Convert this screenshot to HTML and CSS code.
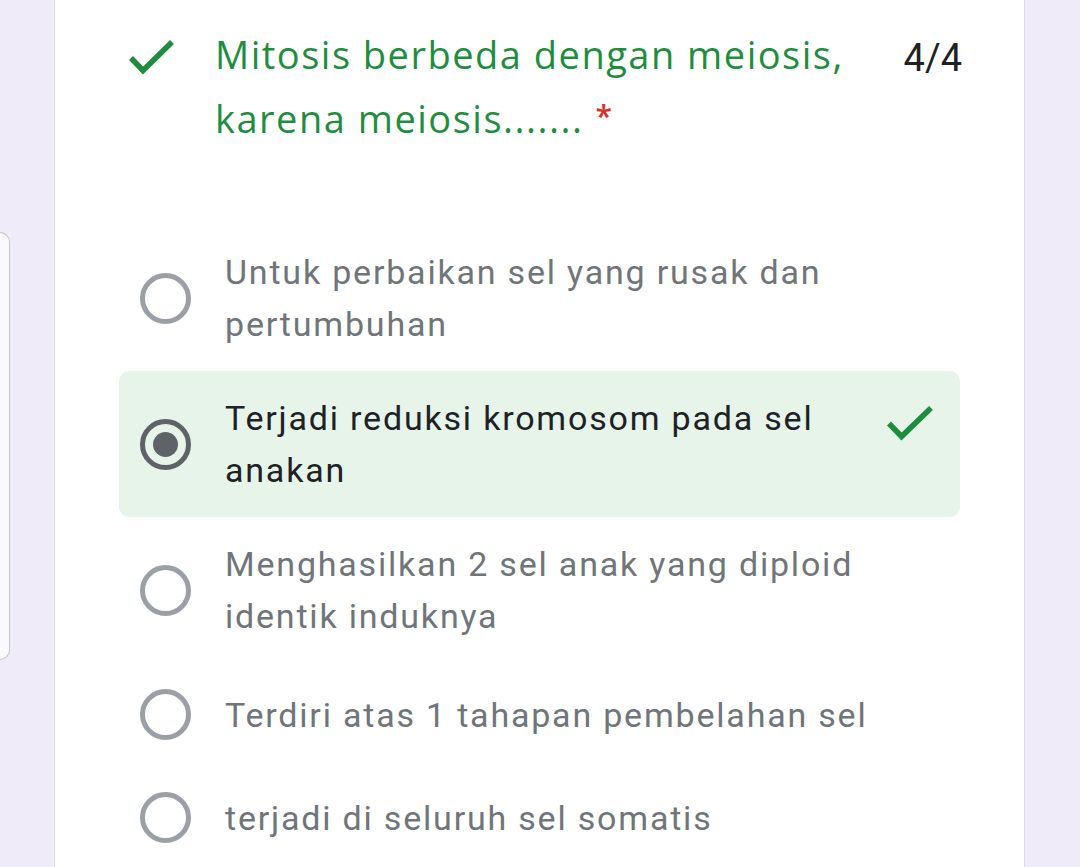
FILE: index.html
```html
<!DOCTYPE html>
<html lang="id">
<head>
<meta charset="utf-8">
<title>Kuis</title>
<link rel="stylesheet" href="styles.css">
</head>
<body>
<div class="page">
  <div class="peek"></div>
  <main class="card">
    <header class="question">
      <div class="q-icon">
        <svg width="50" height="40" viewBox="0 0 50 40"><polyline points="2,18 14,30.5 43,2" fill="none" stroke="#1e8e3e" stroke-width="5.5"/></svg>
      </div>
      <h1 class="q-title">Mitosis berbeda dengan meiosis, karena meiosis.......<span class="req">*</span></h1>
      <div class="score">4/4</div>
    </header>
    <ul class="options">
      <li class="option">
        <span class="radio"></span>
        <span class="label">Untuk perbaikan sel yang rusak dan pertumbuhan</span>
        <span class="mark"></span>
      </li>
      <li class="option selected">
        <span class="radio"><span class="dot"></span></span>
        <span class="label">Terjadi reduksi kromosom pada sel anakan</span>
        <span class="mark">
          <svg width="50" height="40" viewBox="0 0 50 40"><polyline points="3,17.5 15.5,30.5 45,2" fill="none" stroke="#1e8e3e" stroke-width="5.5"/></svg>
        </span>
      </li>
      <li class="option">
        <span class="radio"></span>
        <span class="label">Menghasilkan 2 sel anak yang diploid identik induknya</span>
        <span class="mark"></span>
      </li>
      <li class="option">
        <span class="radio"></span>
        <span class="label">Terdiri atas 1 tahapan pembelahan sel</span>
        <span class="mark"></span>
      </li>
      <li class="option">
        <span class="radio"></span>
        <span class="label">terjadi di seluruh sel somatis</span>
        <span class="mark"></span>
      </li>
    </ul>
  </main>
</div>
</body>
</html>
```
FILE: styles.css
```css
html, body {
  margin: 0;
  padding: 0;
  height: 100%;
}
body {
  background: #f0ebf8;
  overflow: hidden;
  font-family: Roboto, "Liberation Sans", sans-serif;
}
.page {
  display: flex;
  align-items: flex-start;
  height: 867px;
}
.peek {
  flex: 0 0 9px;
  height: 426px;
  margin-top: 232px;
  background: #faf9fd;
  border: 1px solid #c7c5cc;
  border-left: none;
  border-radius: 0 10px 10px 0;
}
.card {
  margin-left: 44px;
  width: 971px;
  height: 900px;
  background: #fff;
  border-left: 1px solid #dadce0;
  border-right: 1px solid #dadce0;
  box-sizing: border-box;
}
.question {
  display: flex;
  align-items: flex-start;
  padding: 22px 62px 0 74px;
}
.q-icon {
  flex: 0 0 86px;
  padding-top: 18px;
}
.q-icon svg {
  display: block;
}
.q-title {
  flex: 1;
  margin: 0;
  font-family: "Open Sans", sans-serif;
  font-weight: 400;
  font-size: 38px;
  letter-spacing: 1.5px;
  line-height: 64px;
  color: #1e8e3e;
}
.req {
  display: inline-block;
  color: #d93025;
  font-size: 30px;
  font-weight: 600;
  line-height: 30px;
  letter-spacing: 0;
  vertical-align: 6px;
  margin-left: 12px;
}
.score {
  font-size: 38px;
  line-height: 64px;
  color: #202124;
  padding-top: 4px;
  margin-left: 40px;
}
.options {
  list-style: none;
  margin: 75px 0 0;
  padding: 0 64px 0 64px;
}
.option {
  display: flex;
  align-items: center;
  padding: 21px 0 21px 21px;
  border-radius: 10px;
}
.option.selected {
  background: #e6f4ea;
}
.radio {
  flex: 0 0 auto;
  width: 51px;
  height: 51px;
  margin: 5px 34px 5px 0;
  border: 5px solid #9aa0a6;
  border-radius: 50%;
  box-sizing: border-box;
  display: flex;
  align-items: center;
  justify-content: center;
}
.selected .radio {
  border-color: #5f6368;
}
.dot {
  width: 25px;
  height: 25px;
  border-radius: 50%;
  background: #5f6368;
}
.label {
  flex: 1;
  font-size: 34px;
  letter-spacing: 1.8px;
  line-height: 52px;
  color: #70757a;
}
.selected .label {
  color: #202124;
}
.mark {
  flex: 0 0 72px;
  align-self: flex-start;
  padding-top: 14px;
  margin-left: 18px;
}
.mark svg {
  display: block;
  margin-left: -2px;
}
```
